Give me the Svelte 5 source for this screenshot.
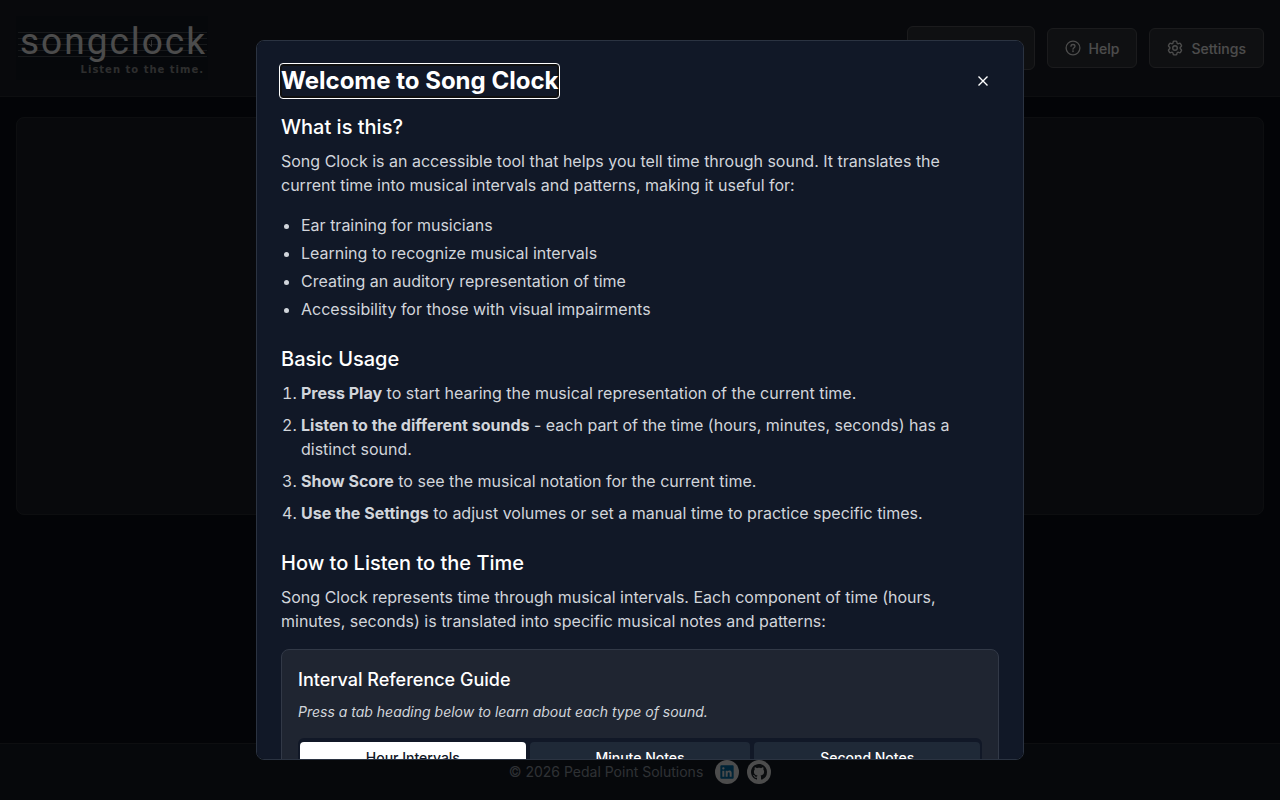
<script>
	import { onMount } from 'svelte';

	let dialog;
	let heading;
	let activeTab = $state('hours');

	const uses = [
		'Ear training for musicians',
		'Learning to recognize musical intervals',
		'Creating an auditory representation of time',
		'Accessibility for those with visual impairments'
	];

	const steps = [
		{ lead: 'Press Play', rest: 'to start hearing the musical representation of the current time.' },
		{ lead: 'Listen to the different sounds', rest: '- each part of the time (hours, minutes, seconds) has a distinct sound.' },
		{ lead: 'Show Score', rest: 'to see the musical notation for the current time.' },
		{ lead: 'Use the Settings', rest: 'to adjust volumes or set a manual time to practice specific times.' }
	];

	const tabs = [
		{ id: 'hours', label: 'Hour Intervals' },
		{ id: 'minutes', label: 'Minute Notes' },
		{ id: 'seconds', label: 'Second Notes' }
	];

	function openHelp() {
		dialog.showModal();
		heading.focus();
	}

	onMount(openHelp);
</script>

<div class="page">
	<header>
		<svg class="logo" width="192" height="64" viewBox="0 0 192 64" role="img">
			<rect width="192" height="64" fill="#141c27" />
			<!-- staff lines -->
			<g stroke="#fff" stroke-opacity="0.25">
				<path d="M2 16.5H191M2 22.5H191M2 28.5H191M2 34.5H191M2 40.5H191" />
			</g>
			<text class="logo-name" x="4" y="38">songclock</text>
			<path d="M135.500 24V30.500L133 28" fill="none" stroke="#fff" stroke-opacity="0.6" />
			<text class="logo-tag" x="188" y="57" text-anchor="end">Listen to the time.</text>
		</svg>

		<nav>
			<button class="btn play" aria-pressed="false"></button>
			<button class="btn" onclick={openHelp}>
				<svg width="16" height="16" viewBox="0 0 16 16" fill="none" stroke="currentColor" stroke-width="1.300" stroke-linecap="round">
					<circle cx="8" cy="8" r="6.900" />
					<path d="M6 6.300C6 5 6.900 4.500 8 4.500S10 5.200 10 6.300C10 7.700 8 7.700 8 9.200" />
					<circle cx="8" cy="11.300" r="0.300" fill="currentColor" />
				</svg>
				Help
			</button>
			<button class="btn">
				<svg width="16" height="16" viewBox="1.500 1.500 21 21" fill="none" stroke="currentColor" stroke-width="1.800" stroke-linejoin="round">
					<path d="M9.594 3.940c.09-.542.56-.940 1.110-.940h2.593c.55 0 1.020.398 1.110.940l.213 1.281c.063.374.313.686.645.870.074.040.147.083.220.127.325.196.720.257 1.075.124l1.217-.456a1.125 1.125 0 0 1 1.370.490l1.296 2.247a1.125 1.125 0 0 1-.260 1.431l-1.003.827c-.293.241-.438.613-.430.992a7.723 7.723 0 0 1 0 .255c-.008.378.137.750.430.991l1.004.827c.424.350.534.955.260 1.430l-1.298 2.247a1.125 1.125 0 0 1-1.369.491l-1.217-.456c-.355-.133-.750-.072-1.076.124a6.470 6.470 0 0 1-.220.128c-.331.183-.581.495-.644.869l-.213 1.281c-.090.543-.560.940-1.110.940h-2.594c-.550 0-1.019-.398-1.110-.940l-.213-1.281c-.062-.374-.312-.686-.644-.870a6.520 6.520 0 0 1-.220-.127c-.325-.196-.720-.257-1.076-.124l-1.217.456a1.125 1.125 0 0 1-1.369-.490l-1.297-2.247a1.125 1.125 0 0 1 .260-1.431l1.004-.827c.292-.240.437-.613.430-.991a6.932 6.932 0 0 1 0-.255c.007-.380-.138-.751-.430-.992l-1.004-.827a1.125 1.125 0 0 1-.260-1.430l1.297-2.247a1.125 1.125 0 0 1 1.370-.491l1.216.456c.356.133.751.072 1.076-.124.072-.044.146-.086.220-.128.332-.183.582-.495.644-.869z" />
					<circle cx="12" cy="12" r="3" />
				</svg>
				Settings
			</button>
		</nav>
	</header>

	<main>
		<section class="panel"></section>
	</main>

	<footer>
		<span>© 2026 Pedal Point Solutions</span>
		<div class="social">
			<a href="https://www.linkedin.com" aria-label="LinkedIn">
				<svg width="16" height="16" viewBox="0 0 24 24" fill="#0077b5">
					<path d="M20.500 2h-17A1.500 1.500 0 0 0 2 3.500v17A1.500 1.500 0 0 0 3.500 22h17a1.500 1.500 0 0 0 1.500-1.500v-17A1.500 1.500 0 0 0 20.500 2zM8 19H5v-9h3zM6.500 8.250A1.750 1.750 0 1 1 8.300 6.500a1.780 1.780 0 0 1-1.800 1.750zM19 19h-3v-4.740c0-1.420-.6-1.930-1.380-1.930A1.740 1.740 0 0 0 13 14.190V19h-3v-9h2.900v1.300a3.110 3.110 0 0 1 2.700-1.400c1.550 0 3.360.86 3.360 3.660z" />
				</svg>
			</a>
			<a href="https://github.com" aria-label="GitHub">
				<svg width="16" height="16" viewBox="0 0 16 16" fill="#24292f">
					<path d="M8 0C3.580 0 0 3.580 0 8c0 3.540 2.290 6.530 5.470 7.590.4.070.55-.170.55-.380 0-.190-.010-.820-.010-1.490-2.010.370-2.530-.490-2.690-.940-.090-.230-.480-.940-.820-1.130-.280-.150-.680-.520-.010-.530.630-.010 1.080.580 1.230.820.720 1.210 1.870.870 2.330.660.070-.520.280-.870.510-1.070-1.780-.200-3.640-.890-3.640-3.950 0-.870.310-1.590.820-2.150-.080-.200-.360-1.020.080-2.120 0 0 .670-.210 2.200.820.640-.180 1.320-.270 2-.270s1.360.090 2 .270c1.530-1.040 2.200-.820 2.200-.820.440 1.100.160 1.920.080 2.120.510.560.820 1.270.820 2.150 0 3.070-1.870 3.750-3.650 3.950.290.250.540.730.540 1.480 0 1.070-.010 1.930-.010 2.200 0 .210.150.460.550.380A8.010 8.010 0 0 0 16 8c0-4.420-3.580-8-8-8z" />
				</svg>
			</a>
		</div>
	</footer>
</div>

<dialog bind:this={dialog} aria-labelledby="help-title">
	<div class="dialog-head">
		<h2 id="help-title" bind:this={heading} tabindex="-1">Welcome to Song Clock</h2>
		<button class="close" aria-label="Close" onclick={() => dialog.close()}>
			<svg width="16" height="16" viewBox="0 0 16 16" fill="none" stroke="currentColor" stroke-width="1.400">
				<path d="M3.500 3.500L12.500 12.500M12.500 3.500L3.500 12.500" />
			</svg>
		</button>
	</div>

	<div class="sections">
		<section>
			<h3>What is this?</h3>
			<p>
				Song Clock is an accessible tool that helps you tell time through sound. It translates the
				current time into musical intervals and patterns, making it useful for:
			</p>
			<ul>
				{#each uses as use}
					<li>{use}</li>
				{/each}
			</ul>
		</section>

		<section>
			<h3>Basic Usage</h3>
			<ol>
				{#each steps as step}
					<li><strong>{step.lead}</strong> {step.rest}</li>
				{/each}
			</ol>
		</section>

		<section>
			<h3>How to Listen to the Time</h3>
			<p>
				Song Clock represents time through musical intervals. Each component of time (hours,
				minutes, seconds) is translated into specific musical notes and patterns:
			</p>
			<div class="guide">
				<h4>Interval Reference Guide</h4>
				<p class="hint">Press a tab heading below to learn about each type of sound.</p>
				<div class="tabs" role="tablist">
					{#each tabs as tab (tab.id)}
						<button
							role="tab"
							class:active={activeTab === tab.id}
							aria-selected={activeTab === tab.id}
							onclick={() => (activeTab = tab.id)}
						>{tab.label}</button>
					{/each}
				</div>
			</div>
		</section>
	</div>
</dialog>

<style>
	:global(body) {
		background: #0b0f19;
		color-scheme: dark;
	}

	.page,
	dialog {
		font-family: Inter, sans-serif;
	}

	.page {
		min-height: 100vh;
		display: flex;
		flex-direction: column;
		color: #fff;
	}

	h2, h3, h4, p, ul, ol {
		margin: 0;
	}

	button {
		font-family: inherit;
		cursor: pointer;
	}

	/* Header */
	header {
		display: flex;
		align-items: center;
		justify-content: space-between;
		padding: 16px;
		background: #1d2129;
		border-bottom: 1px solid #2d3138;
	}

	.logo {
		display: block;
	}

	.logo-name {
		font: 400 37px Roboto, sans-serif;
		letter-spacing: 2px;
		fill: #fff;
	}

	.logo-tag {
		font: 700 10px 'DejaVu Sans', sans-serif;
		letter-spacing: 1px;
		fill: #999;
	}

	nav {
		display: flex;
		align-items: center;
		gap: 12px;
	}

	.btn {
		display: flex;
		align-items: center;
		gap: 8px;
		height: 40px;
		padding: 0 17px;
		background: #33363c;
		border: 1px solid #5a5c62;
		border-radius: 6px;
		color: #fff;
		font-size: 14px;
		font-weight: 500;
	}

	.play {
		width: 128px;
		height: 44px;
	}

	main {
		flex: 1;
		padding: 20px 16px;
	}

	.panel {
		height: calc(50vh - 2px);
		box-sizing: border-box;
		background: #1d2129;
		border: 1px solid #2d3138;
		border-radius: 8px;
	}

	footer {
		display: flex;
		align-items: center;
		justify-content: center;
		gap: 12px;
		padding: 16px;
		background: #141b26;
		border-top: 1px solid #2d3138;
		color: #9ca3af;
		font-size: 14px;
		line-height: 24px;
	}

	.social {
		display: flex;
		gap: 8px;
	}

	.social a {
		display: grid;
		place-items: center;
		width: 24px;
		height: 24px;
		border-radius: 50%;
		background: #fff;
	}

	/* Help dialog */
	dialog {
		box-sizing: border-box;
		width: min(60vw, 800px);
		max-width: none;
		max-height: 90vh;
		margin: auto;
		padding: 24px;
		overflow-y: auto;
		scrollbar-width: none;
		background: #111827;
		border: 1px solid #2b3341;
		border-radius: 8px;
		color: #d1d5db;
		font-size: 16px;
		line-height: 24px;
	}

	dialog::backdrop {
		background: rgba(0, 0, 0, 0.7);
	}

	.dialog-head {
		display: flex;
		align-items: center;
		justify-content: space-between;
		margin-bottom: 16px;
	}

	h2 {
		border-radius: 2px;
		color: #fff;
		font-size: 24px;
		font-weight: 700;
		line-height: 32px;
	}

	h2:focus-visible {
		outline: 1px solid #fff;
		outline-offset: 1px;
		box-shadow: 0 0 0 1px #101010, inset 0 0 0 1px #101010;
	}

	.close {
		display: grid;
		place-items: center;
		width: 32px;
		height: 32px;
		padding: 0;
		background: none;
		border: 0;
		color: #fff;
	}

	.sections {
		display: grid;
		gap: 24px;
	}

	h3 {
		margin-bottom: 8px;
		color: #fff;
		font-size: 20px;
		font-weight: 500;
		line-height: 28px;
	}

	ul, ol {
		display: grid;
		padding-left: 20px;
	}

	ul {
		gap: 4px;
		margin-top: 16px;
	}

	ol {
		gap: 8px;
	}

	strong {
		font-weight: 700;
	}

	.guide {
		margin-top: 16px;
		padding: 16px;
		background: #1f2531;
		border: 1px solid #323947;
		border-radius: 8px;
	}

	h4 {
		margin-bottom: 8px;
		color: #fff;
		font-size: 18px;
		font-weight: 500;
		line-height: 28px;
	}

	.hint {
		margin-bottom: 16px;
		font-size: 14px;
		font-style: italic;
		line-height: 20px;
	}

	.tabs {
		display: flex;
		gap: 4px;
		padding: 4px 2px;
		background: #111827;
		border-radius: 6px;
	}

	.tabs button {
		flex: 1 1 auto;
		padding: 6px 12px;
		background: #1f2937;
		border: 0;
		border-radius: 4px;
		color: #fff;
		font-size: 14px;
		font-weight: 500;
		line-height: 20px;
	}

	.tabs .active {
		background: #fff;
		color: #111827;
	}
</style>
